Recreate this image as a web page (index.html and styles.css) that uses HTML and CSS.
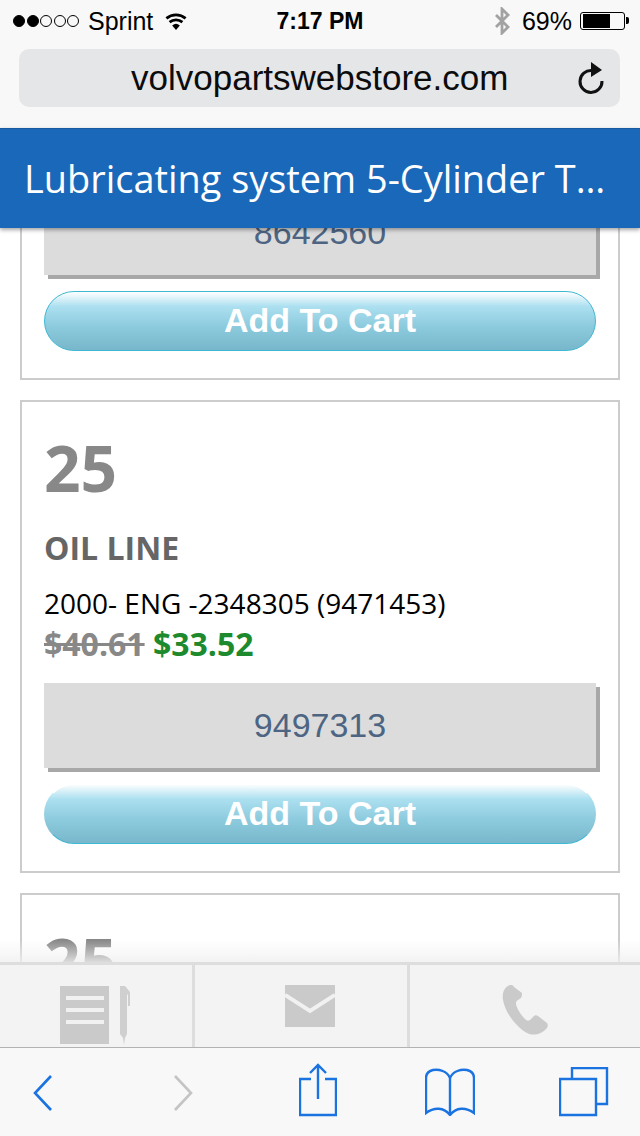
FILE: index.html
```html
<!DOCTYPE html>
<html>
<head>
  <title>Lubricating system</title>
  <link rel="stylesheet" href="styles.css">
</head>
<body>
  <div class="browser-top">
    <div class="status">
      <div class="status-left">
        <span class="dots"><i class="dot on"></i><i class="dot on"></i><i class="dot"></i><i class="dot"></i><i class="dot"></i></span>
        <span class="carrier">Sprint</span>
        <svg class="wifi" width="24" height="18" viewBox="0 0 24 18">
          <path d="M12 18 8.200 13.400a6 6 0 0 1 7.600 0z" fill="#000"/>
          <path d="M5.600 10.200a10 10 0 0 1 12.800 0M2.400 6.400a15 15 0 0 1 19.200 0" fill="none" stroke="#000" stroke-width="2.800"/>
        </svg>
      </div>
      <div class="time">7:17 PM</div>
      <div class="status-right">
        <svg class="bt" width="16" height="28" viewBox="0 0 16 28">
          <path d="M2 8 14 20 8 26V2l6 6L2 20" fill="none" stroke="#a2a2a2" stroke-width="2.800"/>
        </svg>
        <span class="percent">69%</span>
        <span class="battery"><span class="battery-fill"></span></span>
      </div>
    </div>
    <div class="urlbar">
      <span class="url">volvopartswebstore.com</span>
      <svg class="reload" width="28" height="32" viewBox="0 0 28 32">
        <path d="M15 8.500A11 11 0 1 0 25 19" fill="none" stroke="#111" stroke-width="3"/>
        <path d="M14 0 25 8 14 15z" fill="#111"/>
      </svg>
    </div>
  </div>

  <div class="title-bar">
    <h1>Lubricating system 5-Cylinder Turbo Diesel Engine Parts</h1>
  </div>

  <div class="content">
    <div class="part part-cut">
      <div class="part-no">8642560</div>
      <a class="add-btn">Add To Cart</a>
    </div>
    <div class="part">
      <div class="ref">25</div>
      <h2>OIL LINE</h2>
      <p class="desc">2000- ENG -2348305 (9471453)</p>
      <p class="prices"><s>$40.61</s> <span class="sale">$33.52</span></p>
      <div class="part-no">9497313</div>
      <a class="add-btn add-btn-low">Add To Cart</a>
    </div>
    <div class="part">
      <div class="ref">25</div>
    </div>
  </div>

  <div class="contact-bar">
    <div class="contact-cell doc">
      <svg width="71" height="59" viewBox="0 0 71 59">
        <rect width="49" height="58" fill="#cacaca"/>
        <path d="M6 12h38M6 24h38M6 36h38" stroke="#f1f1f1" stroke-width="4"/>
        <path d="M60 0h5l5 6v14h-2V9l-1-1v40l-2 4-1 7-1-7-3-4z" fill="#cfcfcf"/>
      </svg>
    </div>
    <div class="contact-cell mail">
      <svg width="50" height="42" viewBox="0 0 50 42">
        <rect width="50" height="42" fill="#cacaca"/>
        <path d="M0 10 25 26 50 10" fill="none" stroke="#f1f1f1" stroke-width="4"/>
      </svg>
    </div>
    <div class="contact-cell">
      <svg width="46" height="50" viewBox="0 0 46 50">
        <path d="M8 0C2 2 0 8 1 15c2 12 12 26 24 33 6 3 14 2 20-5 1-2 1-3 0-5l-9-7c-2-1-3-1-5 1l-3 3c-2 1-3 1-5-1-4-4-8-10-9-15 0-2 0-3 2-4l3-2c1-2 1-3 1-5L12 2C11 0 10 0 8 0z" fill="#cacaca"/>
      </svg>
    </div>
  </div>

  <div class="toolbar">
    <svg class="tool-back" width="20" height="36" viewBox="0 0 20 36">
      <path d="M18 1 2 18l16 17" fill="none" stroke="#1a73e0" stroke-width="2.600"/>
    </svg>
    <svg class="tool-fwd" width="20" height="36" viewBox="0 0 20 36">
      <path d="M2 1l16 17L2 35" fill="none" stroke="#c4c4c4" stroke-width="2.600"/>
    </svg>
    <svg class="tool-share" width="38" height="54" viewBox="0 0 38 54">
      <path d="M12 16H1v36h36V16H26M19 36V2M11 10l8-8 8 8" fill="none" stroke="#1a73e0" stroke-width="2.400"/>
    </svg>
    <svg class="tool-book" width="50" height="48" viewBox="0 0 50 48">
      <path d="M25 10C22 3 14 1 8 2 4 3 1 5 1 10v35c8-6 18-6 24 2 6-8 16-8 24-2V10c0-5-3-7-7-8-6-1-14 1-17 8zm0 0v37" fill="none" stroke="#1a73e0" stroke-width="2.400"/>
    </svg>
    <svg class="tool-tabs" width="50" height="50" viewBox="0 0 50 50">
      <path d="M13 11V1h35v36H38M1 12h36v36H1z" fill="none" stroke="#1a73e0" stroke-width="2.400"/>
    </svg>
  </div>
</body>
</html>
```

FILE: styles.css
```css
html, body {
  margin: 0;
  height: 100%;
}
body {
  width: 640px;
  height: 1136px;
  display: flex;
  flex-direction: column;
  overflow: hidden;
  font-family: "Open Sans", sans-serif;
  background: #fff;
}

/* browser chrome */
.browser-top {
  height: 128px;
  flex: none;
  background: #f8f8f8;
  font-family: "Liberation Sans", Arial, sans-serif;
  color: #000;
}
.status {
  height: 42px;
  position: relative;
  display: flex;
  align-items: center;
  justify-content: space-between;
  padding: 0 11px 0 13px;
  font-size: 25px;
}
.status-left, .status-right {
  display: flex;
  align-items: center;
}
.dots {
  display: flex;
  gap: 1.500px;
}
.dot {
  width: 10px;
  height: 10px;
  border: 1px solid #000;
  border-radius: 50%;
}
.dot.on {
  background: #000;
}
.carrier {
  margin-left: 9px;
}
.wifi {
  margin-left: 11px;
}
.time {
  position: absolute;
  left: 0;
  right: 0;
  text-align: center;
  font-weight: bold;
  font-size: 23px;
  pointer-events: none;
}
.percent {
  margin-left: 12px;
}
.battery {
  width: 45px;
  height: 18px;
  margin: 0 4px 0 8px;
  border: 1px solid #000;
  border-radius: 3px;
  padding: 1px 2px;
  box-sizing: border-box;
  position: relative;
  display: block;
}
.battery::after {
  content: "";
  position: absolute;
  right: -5px;
  top: 4px;
  width: 3px;
  height: 7px;
  background: #000;
  border-radius: 0 2px 2px 0;
}
.battery-fill {
  display: block;
  width: 69%;
  height: 100%;
  background: #000;
}
.urlbar {
  margin: 7px 20px 0 19px;
  height: 58px;
  background: #e5e6e8;
  border-radius: 10px;
  display: flex;
  align-items: center;
  justify-content: space-between;
  padding: 0 15px 0 112px;
}
.url {
  font-size: 35px;
  color: #0c0c0c;
}

/* page header */
.title-bar {
  height: 100px;
  flex: none;
  background: #1a68b9;
  border-top: 1px solid #175a9f;
  box-sizing: border-box;
  box-shadow: 0 2px 4px rgba(0, 0, 0, 0.35);
  position: relative;
  z-index: 2;
  display: flex;
  align-items: center;
  padding: 0 33px 1px 24px;
}
.title-bar h1 {
  margin: 0;
  font-size: 37.900px;
  font-weight: 400;
  color: #fff;
  white-space: nowrap;
  overflow: hidden;
  text-overflow: ellipsis;
}

/* parts list */
.content {
  flex: 1;
  min-height: 0;
  overflow: hidden;
  padding: 0 20px;
}
.part {
  border: 2px solid #ccc;
  padding: 22px 22px 27px;
  margin-bottom: 20px;
}
.part-cut {
  margin-top: -78px;
}
.ref {
  font-size: 64px;
  font-weight: 700;
  line-height: 88px;
  color: #888;
}
.part h2 {
  margin: 15px 0 0;
  font-size: 32px;
  line-height: 42px;
  font-weight: 700;
  color: #666;
}
.desc {
  margin: 16px 0 0;
  font-size: 28px;
  line-height: 36px;
  color: #000;
}
.prices {
  margin: 1px 0 0;
  font-size: 32px;
  line-height: 44px;
  font-weight: 700;
  color: #888;
}
.sale {
  color: #1e8a2e;
}
.part-no {
  margin-top: 17px;
  background: #dcdcdc;
  box-shadow: 4px 4px 0 #a8a8a8;
  height: 85px;
  line-height: 85px;
  text-align: center;
  font-family: "Liberation Sans", Arial, sans-serif;
  font-size: 34px;
  color: #4d6582;
}
.part-cut .part-no {
  margin-top: 16px;
}
.add-btn {
  display: block;
  margin-top: 16px;
  height: 60px;
  box-sizing: border-box;
  border: 1px solid #3fb8d2;
  border-radius: 30px;
  background: linear-gradient(#fff 0%, #ace0f0 25%, #8ccadd 60%, #78b6cb 100%);
  text-align: center;
  line-height: 56px;
  font-family: "Liberation Sans", Arial, sans-serif;
  font-size: 34px;
  font-weight: bold;
  color: #fff;
}
.add-btn-low {
  border-top-color: #fff;
  border-left-color: transparent;
  border-right-color: transparent;
  background-origin: border-box;
}

/* fixed bottom bars */
.contact-bar {
  height: 85px;
  flex: none;
  display: flex;
  box-sizing: border-box;
  background: #f3f3f3;
  border-top: 3px solid #ddd;
  position: relative;
}
.contact-bar::before {
  content: "";
  position: absolute;
  left: 0;
  right: 0;
  top: -25px;
  height: 22px;
  background: linear-gradient(rgba(248, 248, 248, 0), rgba(240, 240, 240, 0.8));
}
.contact-cell {
  display: flex;
  justify-content: center;
  padding-top: 20px;
  box-sizing: border-box;
  border-right: 3px solid #ddd;
  width: 215px;
}
.contact-cell.doc {
  width: 195px;
  padding: 21px 2px 0 0;
}
.contact-cell:last-child {
  width: 230px;
  border-right: 0;
}
.contact-cell.mail {
  padding-left: 18px;
}
.toolbar {
  height: 89px;
  flex: none;
  box-sizing: border-box;
  border-top: 1px solid #b2b2b2;
  background: #f8f8f8;
  display: flex;
  align-items: flex-start;
  padding-left: 33px;
}
.tool-back { margin-top: 27px; }
.tool-fwd { margin: 27px 0 0 120px; }
.tool-share { margin: 15px 0 0 106px; }
.tool-book { margin: 20px 0 0 88px; }
.tool-tabs { margin: 19px 0 0 84px; }
```
